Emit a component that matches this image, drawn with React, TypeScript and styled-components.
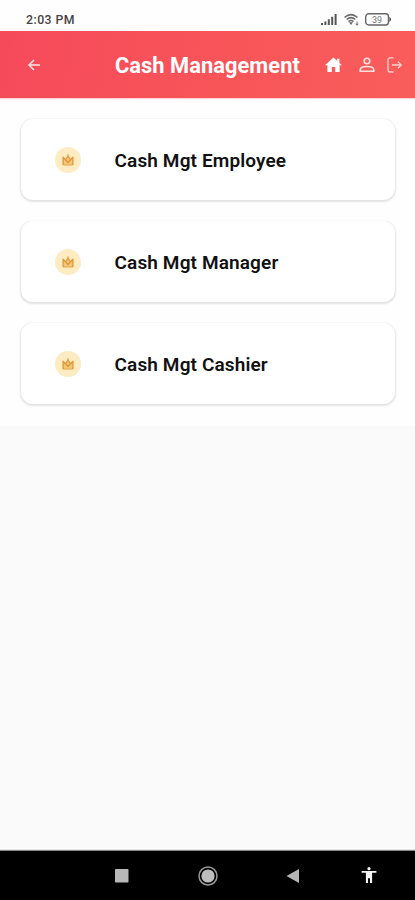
import React from "react";
import styled, { createGlobalStyle } from "styled-components";

const GlobalStyle = createGlobalStyle`
  * { box-sizing: border-box; }
  body { margin: 0; background: #fafafa; font-family: Roboto, sans-serif; }
`;

const Screen = styled.div`
  display: flex;
  flex-direction: column;
  width: 415px;
  height: 900px;
  overflow: hidden;
  background: #fafafa;
`;

const StatusBar = styled.div`
  display: flex;
  justify-content: space-between;
  align-items: center;
  height: 31px;
  padding: 8px 23px 0 26px;
  background: #fefefe;
`;

const Clock = styled.span`
  font-size: 12.3px;
  line-height: 14px;
  font-weight: 500;
  letter-spacing: 0.45px;
  color: #454545;
  padding-top: 1px;
`;

const StatusIcons = styled.div`
  display: flex;
  align-items: center;
  gap: 6px;
`;

const Header = styled.header`
  display: flex;
  align-items: center;
  height: 67px;
  padding: 1px 12px 0 27px;
  color: #fff;
  background: linear-gradient(100deg, #f64a5b 0%, #f85459 50%, #f95d5b 100%);
  box-shadow: 0 1px 1px #fbd3d3;
  z-index: 1;
`;

const IconButton = styled.button<{ $width: number; $gap?: number }>`
  display: flex;
  width: ${(p) => p.$width}px;
  margin: 0 0 0 ${(p) => p.$gap ?? 0}px;
  padding: 0;
  border: 0;
  background: none;
  color: inherit;
`;

const Title = styled.h1`
  flex: 1;
  margin: 0 0 0 74px;
  padding-top: 2px;
  font-size: 21.8px;
  line-height: 26px;
  font-weight: 700;
  letter-spacing: 0.07px;
  white-space: nowrap;
`;

const CardList = styled.main`
  display: flex;
  flex-direction: column;
  gap: 21px;
  padding: 21px 20px 22px 21px;
  background: #fefefe;
`;

const Card = styled.section`
  display: flex;
  align-items: center;
  height: 81px;
  padding-left: 34px;
  border-radius: 12px;
  background: #fff;
  box-shadow: 0 1px 2px 0.5px rgba(0, 0, 0, 0.11);
`;

const Badge = styled.span`
  display: flex;
  align-items: center;
  justify-content: center;
  width: 26px;
  height: 26px;
  margin-right: 33.5px;
  border-radius: 50%;
  background: #fdebc2;
`;

const CardTitle = styled.h2`
  margin: 0;
  padding-top: 2px;
  font-size: 19px;
  line-height: 24px;
  font-weight: 600;
  letter-spacing: 0.13px;
  color: #111;
  white-space: nowrap;
`;

const NavBar = styled.nav`
  display: flex;
  align-items: center;
  height: 49px;
  margin-top: auto;
  padding: 1px 0 0 114px;
  background: #000;
  box-shadow: 0 -1px 1px #888;
`;

const SignalIcon = () => (
  <svg width="17" height="13" viewBox="0 0 17 13" fill="#555">
    <path d="M0 10h2v2H0zM3.4 8.5h2V12h-2zM6.8 6.3h2V12h-2zM10.2 3.8h2V12h-2z" />
    <path d="M13.6 1h2v11h-2z" />
  </svg>
);

const WifiIcon = () => (
  <svg width="15" height="13" viewBox="0 0 15 13" fill="none" stroke="#6c6c6c" strokeWidth="1.5">
    <path d="M.5 4.5Q7 -1.2 13.5 4.5M2.6 6.5Q7 2.8 11.4 6.5M4.5 8.6Q7 6.5 9.5 8.6" />
    <path d="M5 9.3h4L7 12z" fill="#666" stroke="none" />
    <path d="M13 8.5v3.7M11.5 10.7l1.5 1.5 1.5-1.5" strokeWidth="1" />
  </svg>
);

const BatteryIcon = () => (
  <svg width="27" height="13" viewBox="0 0 27 13">
    <rect x=".7" y=".8" width="22.8" height="11.2" rx="3" fill="none" stroke="#666" strokeWidth="1.4" />
    <path d="M24.4 3.8q3.4 2.6 0 5.2z" fill="#555" />
    <text x="12" y="9.7" textAnchor="middle" fontFamily="Roboto, sans-serif" fontSize="9" fill="#777">39</text>
  </svg>
);

const BackIcon = () => (
  <svg width="14" height="14" viewBox="0 0 14 14" fill="none" stroke="#ffe5e6" strokeWidth="1.5">
    <path d="M13 7H2M7 2L2 7l5 5" />
  </svg>
);

const HomeIcon = () => (
  <svg width="17" height="16" viewBox="0 0 17 16" fill="#fff">
    <path d="M8.5.5L0 8.3h2.4V15h4.4v-5h3.4v5h4.4V8.3H17l-2.6-2.4V1.8h-2.3v2z" />
  </svg>
);

const UserIcon = () => (
  <svg width="16" height="16" viewBox="0 0 16 16" fill="none" stroke="#ffe1df" strokeWidth="1.6">
    <circle cx="8" cy="4" r="2.8" />
    <path d="M1.2 14.3v-1.4C1.2 10.5 4.4 9.5 8 9.5s6.8 1 6.8 3.4v1.4z" />
  </svg>
);

const LogoutIcon = () => (
  <svg width="16" height="16" viewBox="0 0 16 16" fill="none" stroke="#ffd0ce" strokeWidth="1.3">
    <path d="M6.5.9H3Q1 .9 1 3v10q0 2 2 2h3.5M5 8h9M11 4.8L14.3 8 11 11.2" />
  </svg>
);

const CrownIcon = () => (
  <svg width="12" height="12" viewBox="0 0 12 12">
    <path d="M1 3.2L4 6.2 6 3.2l2 3 3-3V11H1z" fill="#f3c67c" />
    <path d="M1.1 10.9V3.2L6 8.5l4.9-5.3v7.7M3.6 5.8L6 2.2l2.4 3.6" fill="none" stroke="#df9838" strokeWidth="1.3" strokeLinejoin="round" />
    <path d="M6 .2v3M1 11h10" fill="none" stroke="#e5a548" strokeWidth="1.2" />
  </svg>
);

const RecentsIcon = () => (
  <svg width="16" height="16" viewBox="0 0 16 16">
    <rect x="1" y="1" width="13.5" height="13.5" rx=".7" fill="#b8b8b8" />
  </svg>
);

const HomeCircleIcon = () => (
  <svg width="20" height="20" viewBox="0 0 20 20">
    <circle cx="10" cy="10" r="9" fill="none" stroke="#999" strokeWidth="1.5" />
    <circle cx="10" cy="10" r="6.6" fill="#bdbdbd" />
  </svg>
);

const NavBackIcon = () => (
  <svg width="14" height="16" viewBox="0 0 14 16">
    <path d="M13 1v14L.5 8z" fill="#b5b5b5" />
  </svg>
);

const AccessibilityIcon = () => (
  <svg width="16" height="18" viewBox="0 0 16 18" fill="#f5f5f5">
    <circle cx="8" cy="1.7" r="1.6" />
    <path d="M.6 3.9h14.8v1.9h-4.3V16H9v-4.8H7V16H4.9V5.8H.6z" />
  </svg>
);

const modules = ["Cash Mgt Employee", "Cash Mgt Manager", "Cash Mgt Cashier"];

export default function App() {
  return (
    <Screen>
      <GlobalStyle />
      <StatusBar>
        <Clock>2:03 PM</Clock>
        <StatusIcons>
          <SignalIcon />
          <WifiIcon />
          <BatteryIcon />
        </StatusIcons>
      </StatusBar>
      <Header>
        <IconButton $width={14} aria-label="Back"><BackIcon /></IconButton>
        <Title>Cash Management</Title>
        <IconButton $width={17} aria-label="Home"><HomeIcon /></IconButton>
        <IconButton $width={16} $gap={17} aria-label="Profile"><UserIcon /></IconButton>
        <IconButton $width={16} $gap={12} aria-label="Log out"><LogoutIcon /></IconButton>
      </Header>
      <CardList>
        {modules.map((name) => (
          <Card key={name}>
            <Badge><CrownIcon /></Badge>
            <CardTitle>{name}</CardTitle>
          </Card>
        ))}
      </CardList>
      <NavBar>
        <IconButton $width={16} aria-label="Recent apps"><RecentsIcon /></IconButton>
        <IconButton $width={20} $gap={68} aria-label="Home screen"><HomeCircleIcon /></IconButton>
        <IconButton $width={14} $gap={68} aria-label="Previous"><NavBackIcon /></IconButton>
        <IconButton $width={16} $gap={61} aria-label="Accessibility"><AccessibilityIcon /></IconButton>
      </NavBar>
    </Screen>
  );
}
